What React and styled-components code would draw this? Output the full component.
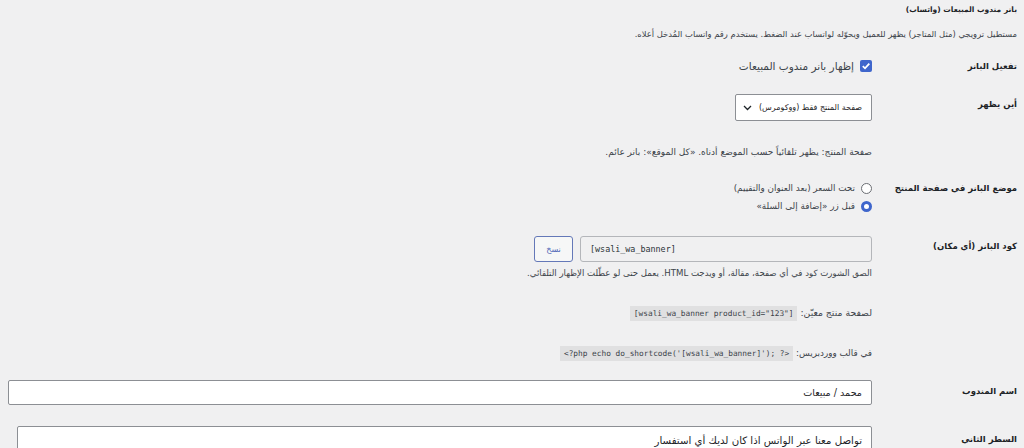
import React from "react"
import styled, { createGlobalStyle } from "styled-components"

const GlobalStyle = createGlobalStyle`
  html, body {
    margin: 0;
    padding: 0;
    background: #f0f0f1;
  }
  body {
    font-family: Tahoma, "Segoe UI", "DejaVu Sans", sans-serif;
    font-size: 9px;
    color: #1d2327;
    overflow: hidden;
  }
`

export default function App() {
  return (
    <Page dir="rtl">
      <GlobalStyle />
      <SectionTitle>بانر مندوب المبيعات (واتساب)</SectionTitle>
      <Intro>
        مستطيل ترويجي (مثل المتاجر) يظهر للعميل ويحوّله لواتساب عند الضغط. يستخدم رقم واتساب المُدخل أعلاه.
      </Intro>

      <Row $top={13}>
        <Label>تفعيل البانر</Label>
        <Field>
          <CheckLine>
            <CheckBox>
              <svg width="10" height="10" viewBox="0 0 10 10">
                <path d="M1.8 5.2 L4 7.3 L8.3 2.6" fill="none" stroke="#fff" strokeWidth="1.8" />
              </svg>
            </CheckBox>
            إظهار بانر مندوب المبيعات
          </CheckLine>
        </Field>
      </Row>

      <Row $top={19}>
        <Label $pad={1}>أين يظهر</Label>
        <Field>
          <Select>
            <span>صفحة المنتج فقط (ووكومرس)</span>
            <svg width="9" height="6" viewBox="0 0 9 6">
              <path d="M1 1 L4.5 4.5 L8 1" fill="none" stroke="#1d2327" strokeWidth="1.3" />
            </svg>
          </Select>
          <Description $top={22} $size={9}>
            صفحة المنتج: يظهر تلقائياً حسب الموضع أدناه. «كل الموقع»: بانر عائم.
          </Description>
        </Field>
      </Row>

      <Row $top={18}>
        <Label>موضع البانر في صفحة المنتج</Label>
        <Field>
          <RadioLine>
            <Radio />
            تحت السعر (بعد العنوان والتقييم)
          </RadioLine>
          <RadioLine>
            <Radio $checked />
            قبل زر «إضافة إلى السلة»
          </RadioLine>
        </Field>
      </Row>

      <Row $top={21}>
        <Label $pad={1}>كود البانر (أي مكان)</Label>
        <Field>
          <CodeLine>
            <ReadonlyInput dir="ltr">[wsali_wa_banner]</ReadonlyInput>
            <CopyButton>نسخ</CopyButton>
          </CodeLine>
          <Description $top={2} $size={8.6}>
            الصق الشورت كود في أي صفحة، مقالة، أو ويدجت HTML. يعمل حتى لو عطّلت الإظهار التلقائي.
          </Description>
          <Description $top={22} $size={9.3}>
            لصفحة منتج معيّن: <Code dir="ltr">[wsali_wa_banner product_id="123"]</Code>
          </Description>
          <Description $top={21} $size={8.8}>
            في قالب ووردبريس: <Code dir="ltr">&lt;?php echo do_shortcode('[wsali_wa_banner]'); ?&gt;</Code>
          </Description>
        </Field>
      </Row>

      <Row $top={17}>
        <Label $pad={2}>اسم المندوب</Label>
        <Field>
          <TextInput>محمد / مبيعات</TextInput>
        </Field>
      </Row>

      <Row $top={21}>
        <Label $pad={4}>السطر الثاني</Label>
        <Field>
          <TextArea>تواصل معنا عبر الواتس اذا كان لديك أي استفسار</TextArea>
        </Field>
      </Row>
    </Page>
  )
}

const Page = styled.div`
  direction: rtl;
  padding: 0 7px 0 8px;
  height: 448px;
  overflow: hidden;
`

const SectionTitle = styled.h2`
  margin: 0;
  font-size: 7.5px;
  font-weight: 700;
  line-height: 20px;
  color: #1d2327;
`

const Intro = styled.p`
  margin: 4px 0 0;
  font-size: 8.4px;
  line-height: 20px;
  color: #3c434a;
`

const Row = styled.div`
  display: flex;
  margin-top: ${p => p.$top}px;
`

const Label = styled.div`
  width: 145px;
  flex-shrink: 0;
  padding-top: ${p => p.$pad || 0}px;
  font-size: 8.5px;
  font-weight: 700;
  line-height: 18px;
  color: #1d2327;
`

const Field = styled.div`
  flex: 1;
  min-width: 0;
`

const CheckLine = styled.label`
  display: flex;
  align-items: center;
  gap: 6px;
  font-size: 10.5px;
  line-height: 18px;
  color: #3c434a;
`

const CheckBox = styled.span`
  width: 12px;
  height: 12px;
  border-radius: 2px;
  background: #3f66cc;
  display: flex;
  align-items: center;
  justify-content: center;
`

const Select = styled.div`
  width: 137px;
  height: 27px;
  box-sizing: border-box;
  border: 1px solid #8c8f94;
  border-radius: 2px;
  background: #fff;
  display: flex;
  align-items: center;
  justify-content: space-between;
  padding: 0 9px 0 7px;
  font-size: 8px;
  white-space: nowrap;
  color: #1d2327;
`

const Description = styled.p`
  margin: ${p => p.$top}px 0 0;
  font-size: ${p => p.$size}px;
  line-height: 18px;
  color: #3c434a;
`

const RadioLine = styled.label`
  display: flex;
  align-items: center;
  gap: 6px;
  font-size: 8.8px;
  line-height: 18px;
  color: #3c434a;
`

const Radio = styled.span`
  width: 11px;
  height: 11px;
  box-sizing: border-box;
  border-radius: 50%;
  background: #fff;
  border: ${p => (p.$checked ? "3px solid #3f66cc" : "1px solid #6b6e73")};
`

const CodeLine = styled.div`
  display: flex;
  gap: 7px;
  align-items: stretch;
`

const ReadonlyInput = styled.div`
  width: 292px;
  height: 26px;
  box-sizing: border-box;
  border: 1px solid #b4b6ba;
  border-radius: 3px;
  background: #f0f0f1;
  padding: 0 9px;
  display: flex;
  align-items: center;
  font-family: "DejaVu Sans Mono", "Liberation Mono", monospace;
  font-size: 8.4px;
  color: #2c3338;
`

const CopyButton = styled.button`
  width: 39px;
  height: 26px;
  border: 1px solid #6478b8;
  border-radius: 3px;
  background: #f6f7f7;
  color: #4a63b5;
  font-family: inherit;
  font-size: 8px;
  padding: 0;
`

const Code = styled.code`
  background: #e0e0e1;
  padding: 3px 4px;
  font-family: "DejaVu Sans Mono", "Liberation Mono", monospace;
  font-size: 7.8px;
  color: #3c434a;
`

const TextInput = styled.div`
  height: 25px;
  box-sizing: border-box;
  border: 1px solid #8c8f94;
  border-radius: 2px;
  background: #fff;
  display: flex;
  align-items: center;
  padding: 0 9px;
  font-size: 9.6px;
  color: #1d2327;
`

const TextArea = styled.div`
  margin-left: 9px;
  height: 60px;
  box-sizing: border-box;
  border: 1px solid #8c8f94;
  border-radius: 2px;
  background: #fff;
  padding: 5px 9px;
  font-size: 10.2px;
  line-height: 18px;
  color: #1d2327;
`
